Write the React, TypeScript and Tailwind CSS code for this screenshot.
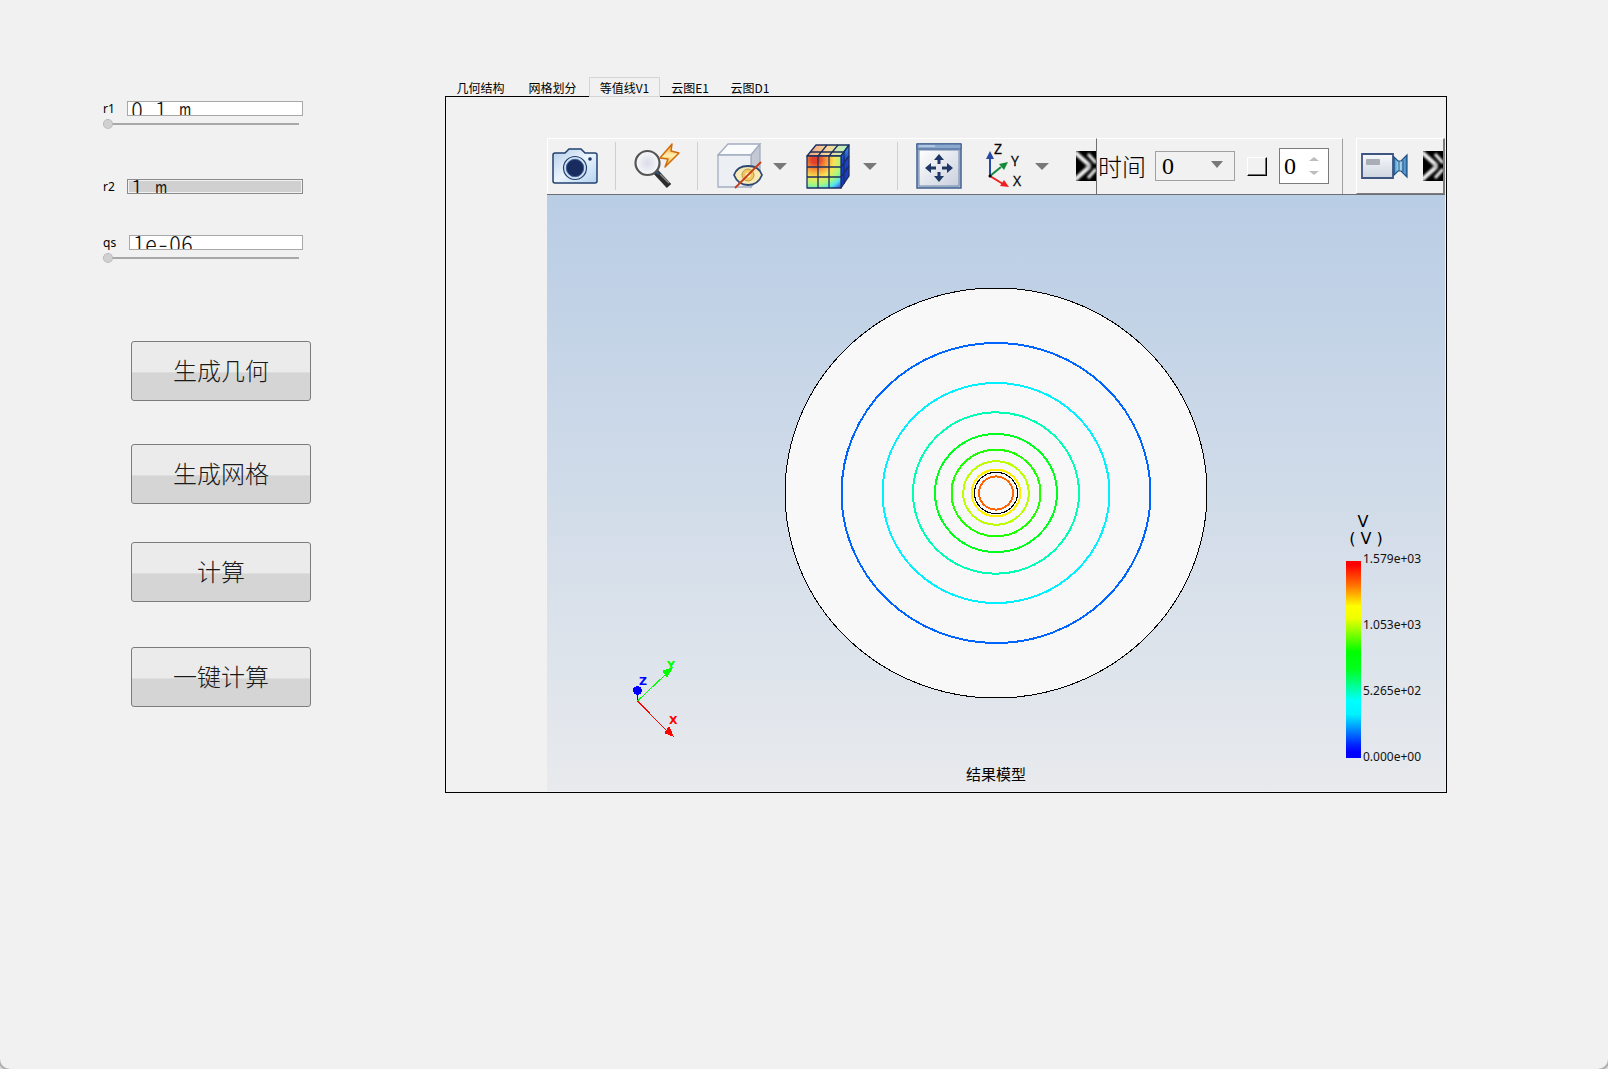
import { useState } from 'react';

const tabs = [
  { name: '几何结构', width: 'w-[71px]' },
  { name: '网格划分', width: 'w-[73px]' },
  { name: '等值线V1', width: 'w-[71px]' },
  { name: '云图E1', width: 'w-[60px]' },
  { name: '云图D1', width: 'w-[60px]' },
];

const contours = [
  { rx: 154.5, ry: 150, color: '#0064ff' },
  { rx: 113.5, ry: 110, color: '#00f0ff' },
  { rx: 83, ry: 80.7, color: '#00ffb4' },
  { rx: 61, ry: 59, color: '#00ff1e' },
  { rx: 44.5, ry: 43.3, color: '#1eff00' },
  { rx: 32.8, ry: 31.8, color: '#beff00' },
  { rx: 24.3, ry: 23.4, color: '#fff000' },
  { rx: 17, ry: 16.6, color: '#ff6400' },
];

const legend = [
  { value: '1.579e+03', y: 368 },
  { value: '1.053e+03', y: 434 },
  { value: '5.265e+02', y: 500 },
  { value: '0.000e+00', y: 566 },
];

export default function App() {
  const [active, setActive] = useState('等值线V1');

  return (
    <div className="min-h-screen bg-[#dedede] font-['Noto_Sans_CJK_SC',sans-serif] text-black">
      <div className="flex min-h-screen rounded-b-[10px] bg-[#f1f1f1] shadow-[0_0_0_2px_#b0b0b0]">
        <aside className="w-[445px] shrink-0 pt-[101px] pl-[103px]">
          <div className="w-[200px]">
            <Field id="r1" value="0.1 m" slider />
            <div className="h-[50px]" />
            <Field id="r2" value="1 m" readOnly />
            <div className="h-[41px]" />
            <Field id="qs" value="1e-06" slider />
          </div>
          <div className="mt-[78px] ml-7 flex w-[180px] flex-col">
            <ActionButton className="mb-[43px]">生成几何</ActionButton>
            <ActionButton className="mb-[38px]">生成网格</ActionButton>
            <ActionButton className="mb-[45px]">计算</ActionButton>
            <ActionButton>一键计算</ActionButton>
          </div>
        </aside>

        <main className="mr-[161px] min-w-0 flex-1 pt-[77px]">
          <div className="flex h-5" role="tablist">
            {tabs.map((tab) => (
              <button
                key={tab.name}
                role="tab"
                aria-selected={active === tab.name}
                onClick={() => setActive(tab.name)}
                className={`${tab.width} h-5 text-center text-xs whitespace-nowrap ${
                  active === tab.name ? 'border border-[#d4d4d4] bg-[#f1f1f1] leading-5' : 'border-b border-black leading-[22px]'
                }`}
              >
                {tab.name}
              </button>
            ))}
            <div className="flex-1 border-b border-black" />
          </div>
          <section className="border-x border-b border-black pt-[41px] pl-[101px] pr-px pb-px">
            <Toolbar />
            <Viewport />
          </section>
        </main>
      </div>
    </div>
  );
}

function Field({ id, value, slider, readOnly }: { id: string; value: string; slider?: boolean; readOnly?: boolean }) {
  return (
    <div>
      <div className="flex h-[15px] items-center">
        <label htmlFor={id} className={`${id === 'qs' ? 'w-[26px]' : 'w-6'} shrink-0 font-['Noto_Sans',sans-serif] text-xs leading-4`}>
          {id}
        </label>
        <input
          id={id}
          defaultValue={value}
          readOnly={readOnly}
          className={`h-[15px] min-w-0 flex-1 border p-px indent-[2px] text-2xl leading-6 font-light text-[#111] outline-none [font-feature-settings:'hwid'] ${
            readOnly ? 'border-[#8a8a8a] bg-[#d0d0d0] bg-clip-content' : 'border-[#a8a8a8] bg-white'
          }`}
        />
      </div>
      {slider && (
        <input
          type="range"
          aria-label={id}
          defaultValue={0}
          className="mt-[3px] block h-[10px] w-[196px] appearance-none bg-transparent [&::-webkit-slider-runnable-track]:h-[2px] [&::-webkit-slider-runnable-track]:bg-[#a8a8a8] [&::-webkit-slider-thumb]:-mt-1 [&::-webkit-slider-thumb]:size-[10px] [&::-webkit-slider-thumb]:appearance-none [&::-webkit-slider-thumb]:rounded-full [&::-webkit-slider-thumb]:border [&::-webkit-slider-thumb]:border-dotted [&::-webkit-slider-thumb]:border-[#a8a8a8] [&::-webkit-slider-thumb]:bg-[#d0d0d0]"
        />
      )}
    </div>
  );
}

function ActionButton({ children, className = '' }: { children: string; className?: string }) {
  return (
    <button
      className={`h-[60px] rounded-[3px] border border-[#7c7c7c] bg-linear-to-b from-[#ebebeb] from-52% to-[#d5d5d5] to-53% pb-[2px] text-2xl font-light text-[#1a1a1a] ${className}`}
    >
      {children}
    </button>
  );
}

function Toolbar() {
  return (
    <div className="flex h-[57px] border-b border-[#6e6e6e]">
      <div className="flex flex-1 items-center border-t border-l border-r border-white border-r-[#6e6e6e] pb-px pl-1">
        <button aria-label="截图"><CameraIcon /></button>
        <Separator className="ml-[17px]" />
        <button aria-label="快速缩放" className="ml-[18px]"><ZoomIcon /></button>
        <Separator className="ml-[16px]" />
        <button aria-label="隐藏" className="ml-[19px]"><HideCubeIcon /></button>
        <button aria-label="隐藏选项" className="ml-[10px]"><Caret /></button>
        <button aria-label="云图" className="ml-[19px]"><ColorCubeIcon /></button>
        <button aria-label="云图选项" className="ml-[13px]"><Caret /></button>
        <Separator className="ml-[20px]" />
        <button aria-label="适应窗口" className="ml-[18px]"><FitIcon /></button>
        <button aria-label="视图方向" className="ml-[23px]"><AxesIcon /></button>
        <button aria-label="视图选项" className="ml-[10px]"><Caret /></button>
        <button aria-label="更多" className="ml-auto"><MoreIcon /></button>
      </div>

      <div className="flex w-[246px] items-center border-t border-r border-t-white border-r-[#a0a0a0] pb-px pl-px">
        <label htmlFor="time" className="text-2xl font-light whitespace-nowrap">时间</label>
        <div className="relative ml-[9px]">
          <select
            id="time"
            className="block h-[30px] w-[80px] appearance-none border border-[#a0a0a0] bg-[#f1f1f1] pl-[6px] font-['Liberation_Serif',serif] text-2xl leading-7"
          >
            <option>0</option>
          </select>
          <span className="pointer-events-none absolute top-[10px] right-[12px]"><Caret small /></span>
        </div>
        <button aria-label="播放" className="ml-3 h-[19px] w-5 border-t border-l border-r border-b border-white border-r-black border-b-black shadow-[inset_-1px_-1px_0_#707070]" />
        <div className="relative ml-3">
          <input
            aria-label="帧"
            defaultValue="0"
            className="block h-9 w-[50px] border border-[#7c7c7c] bg-white pl-1 font-['Liberation_Serif',serif] text-2xl leading-8 outline-none"
          />
          <svg className="pointer-events-none absolute top-2 right-[10px]" width="10" height="19" viewBox="0 0 10 19">
            <path d="M5 1 10 5H0zM0 15h10l-5 4z" fill="#bdbdbd" />
          </svg>
        </div>
      </div>

      <div className="ml-[13px] flex w-[89px] items-center border-t border-r-2 border-b border-l border-white border-r-[#7c7c7c] border-b-[#7c7c7c] pl-1">
        <button aria-label="录像"><VideoIcon /></button>
        <button aria-label="更多" className="ml-auto"><MoreIcon /></button>
      </div>
    </div>
  );
}

function Separator({ className }: { className: string }) {
  return <div className={`h-12 w-px shrink-0 bg-[#cfcfcf] ${className}`} />;
}

function Caret({ small }: { small?: boolean }) {
  return (
    <svg width={small ? 12 : 14} height="7" viewBox="0 0 14 7" preserveAspectRatio="none" className="block">
      <path d="M0 0h14L7 7z" fill="#787878" />
    </svg>
  );
}

function Viewport() {
  return (
    <svg viewBox="0 0 898 596" className="block w-full">
      <defs>
        <linearGradient id="sky" x1="0" y1="0" x2="0" y2="1">
          <stop offset="0" stopColor="#b9cde5" />
          <stop offset="1" stopColor="#e8eaed" />
        </linearGradient>
        <linearGradient id="scale" x1="0" y1="0" x2="0" y2="1">
          <stop offset="0.02" stopColor="#ff0000" />
          <stop offset="0.12" stopColor="#ff6e00" />
          <stop offset="0.23" stopColor="#ffff00" />
          <stop offset="0.29" stopColor="#f0ff00" />
          <stop offset="0.46" stopColor="#00ff00" />
          <stop offset="0.55" stopColor="#00ff1e" />
          <stop offset="0.71" stopColor="#00ffff" />
          <stop offset="0.78" stopColor="#00f0ff" />
          <stop offset="0.93" stopColor="#0028ff" />
          <stop offset="0.97" stopColor="#0000ff" />
        </linearGradient>
      </defs>
      <rect width="898" height="596" fill="url(#sky)" />
      <g fill="none" shapeRendering="crispEdges">
        <ellipse cx="449" cy="298" rx="211" ry="205" fill="#f8f8f8" stroke="#000" />
        {contours.map((c) => (
          <ellipse key={c.color} cx="449" cy="298" rx={c.rx} ry={c.ry} stroke={c.color} strokeWidth="2" />
        ))}
        <ellipse cx="449" cy="298" rx="21.5" ry="20.7" stroke="#000" />
      </g>

      {/* orientation triad */}
      <g shapeRendering="crispEdges" strokeWidth="1">
        <path d="M90.500 506v-12" stroke="#0000ff" />
        <path d="M90.500 506 118 480" stroke="#00ff00" />
        <path d="M90.500 506 120 536" stroke="#ff0000" />
        <circle cx="90.500" cy="495.500" r="4.500" fill="#0000ff" />
        <path d="M125 473l-9 3 4 6z" fill="#00ff00" stroke="#00ff00" />
        <path d="M126 541l-8-3 4-6z" fill="#ff0000" stroke="#ff0000" />
      </g>
      <g fontFamily="DejaVu Sans, sans-serif" fontSize="11" fontWeight="bold">
        <text x="92" y="490" fill="#0000ff">Z</text>
        <text x="120" y="474" fill="#00ff00">Y</text>
        <text x="122" y="529" fill="#ff0000">X</text>
      </g>

      {/* colour scale */}
      <g fontFamily="DejaVu Sans, sans-serif" fontSize="16" textAnchor="middle">
        <text x="816" y="332">V</text>
        <text x="819" y="349">( V )</text>
      </g>
      <rect x="799" y="366" width="15" height="197" fill="url(#scale)" />
      <g fontFamily="Noto Sans, sans-serif" fontSize="12" fill="#111">
        {legend.map((l) => (
          <text key={l.value} x="816" y={l.y}>{l.value}</text>
        ))}
      </g>

      <text x="449" y="585" fontSize="15" textAnchor="middle">结果模型</text>
    </svg>
  );
}

function CameraIcon() {
  return (
    <svg width="46" height="38" viewBox="0 0 46 38" className="block">
      <defs>
        <linearGradient id="cam" x1="0" y1="0" x2="1" y2="1">
          <stop offset="0" stopColor="#b4cdea" />
          <stop offset="0.5" stopColor="#eaf4fd" />
          <stop offset="1" stopColor="#b4d2f0" />
        </linearGradient>
      </defs>
      <path d="M3 6h10l4-4h12l4 4h10q2 0 2 2v26q0 2-2 2H3q-2 0-2-2V8q0-2 2-2z" fill="url(#cam)" stroke="#23406f" strokeWidth="1.500" />
      <circle cx="23" cy="21" r="11.500" fill="#cfe0f2" stroke="#23406f" strokeWidth="1.200" />
      <circle cx="23" cy="21" r="8.700" fill="#182c60" stroke="#3d5f95" />
      <circle cx="38" cy="12" r="1.800" fill="#1d3564" />
    </svg>
  );
}

function ZoomIcon() {
  return (
    <svg width="47" height="46" viewBox="0 0 47 46" className="block">
      <defs>
        <radialGradient id="lens">
          <stop offset="0" stopColor="#d9dce8" />
          <stop offset="1" stopColor="#f8f9fb" />
        </radialGradient>
        <linearGradient id="bolt" x1="0" y1="0" x2="0" y2="1">
          <stop offset="0" stopColor="#ff9d1e" />
          <stop offset="0.5" stopColor="#fff0b0" />
          <stop offset="1" stopColor="#ffa21c" />
        </linearGradient>
      </defs>
      <path d="M22 29l13 14" stroke="#2c2c2c" strokeWidth="6" />
      <path d="M26 31l9 9" stroke="#8a8a8a" strokeWidth="1.500" />
      <path d="M21 27l4 4" stroke="#2c5378" strokeWidth="3" />
      <circle cx="13.500" cy="20" r="12" fill="url(#lens)" stroke="#555" strokeWidth="2.200" />
      <path d="M38 1 26 15l8 1-3 8 14-14-8-2z" fill="url(#bolt)" stroke="#d06c0c" strokeWidth="1.500" strokeLinejoin="round" />
    </svg>
  );
}

function HideCubeIcon() {
  return (
    <svg width="46" height="46" viewBox="0 0 46 46" className="block">
      <path d="M1 12 11 1h32L34 12z" fill="#fafbfc" stroke="#a4aec2" strokeWidth="1.300" />
      <path d="M34 12 43 1v31l-9 12z" fill="#c3c8d2" stroke="#a4aec2" strokeWidth="1.300" />
      <path d="M1 12h33v32H1z" fill="#eceff3" stroke="#a4aec2" strokeWidth="1.300" />
      <path d="M17 32q3-9 14-9t14 9q-4 10-14 10t-14-10z" fill="#f8eab4" stroke="#2d4874" strokeWidth="1.800" />
      <circle cx="31" cy="32" r="6" fill="#f3c95f" stroke="#b9984e" />
      <circle cx="31" cy="32" r="2.500" fill="#fff3c7" />
      <path d="M44 19 18 45" stroke="#c43d1e" strokeWidth="1.800" />
    </svg>
  );
}

function ColorCubeIcon() {
  return (
    <svg width="44" height="45" viewBox="0 0 44 45" className="block">
      <defs>
        <radialGradient id="cubeFront" cx="0.25" cy="0.12" r="1.1">
          <stop offset="0.1" stopColor="#e0402c" />
          <stop offset="0.3" stopColor="#f79a3a" />
          <stop offset="0.5" stopColor="#f7e557" />
          <stop offset="0.7" stopColor="#a8f77c" />
          <stop offset="0.86" stopColor="#52e4f0" />
          <stop offset="1" stopColor="#3b63ef" />
        </radialGradient>
        <linearGradient id="cubeTop">
          <stop offset="0" stopColor="#f0a080" />
          <stop offset="0.5" stopColor="#fbd79a" />
          <stop offset="1" stopColor="#a2f7c8" />
        </linearGradient>
        <linearGradient id="cubeSide" x1="0" y1="0" x2="0" y2="1">
          <stop offset="0" stopColor="#3f9ce8" />
          <stop offset="0.35" stopColor="#1b45d0" />
          <stop offset="1" stopColor="#1a34c0" />
        </linearGradient>
      </defs>
      <g stroke="#1c2f5e" strokeWidth="1.300" strokeLinejoin="round">
        <path d="M1 12 10 1h33l-8 11z" fill="url(#cubeTop)" />
        <path d="M35 12 43 1v31l-8 12z" fill="url(#cubeSide)" />
        <path d="M1 12h34v32H1z" fill="url(#cubeFront)" />
        <path d="M12 12v32M23 12v32M1 23h34M1 33h34M12 12l9-11M23 12 32 1M4 8h34M38 8v32M35 23l8-11M35 33l8-11" fill="none" />
      </g>
    </svg>
  );
}

function FitIcon() {
  return (
    <svg width="46" height="46" viewBox="0 0 46 46" className="block">
      <defs>
        <linearGradient id="fit" x1="0" y1="0" x2="1" y2="1">
          <stop offset="0" stopColor="#fff" />
          <stop offset="1" stopColor="#c9cfdc" />
        </linearGradient>
      </defs>
      <path d="M1 1h44v44H1z" fill="#b9c6d9" stroke="#40608f" strokeWidth="1.500" />
      <path d="M3 7h40v36H3z" fill="url(#fit)" stroke="#7089ae" />
      <path d="M1 1h44v5H1z" fill="#8ba9cf" stroke="#40608f" />
      <path d="M3 3h16" stroke="#d6e5f5" />
      <g fill="#1e3765">
        <path d="M23 11l-5 6h3.500v4h3V17H28zM23 39l-5-6h3.500v-4h3v4H28zM9 25l6-5v3.500h5v3h-5V30zM37 25l-6-5v3.500h-5v3h5V30z" />
      </g>
    </svg>
  );
}

function AxesIcon() {
  return (
    <svg width="40" height="48" viewBox="0 0 40 48" className="block overflow-visible">
      <path d="M5 34V15" stroke="#2549a5" strokeWidth="2" />
      <path d="M5 9 1 17h8z" fill="#2549a5" />
      <path d="M5 34 16 25" stroke="#128a3c" strokeWidth="2" />
      <path d="M23 20l-9 2 5 6z" fill="#128a3c" />
      <path d="M5 34l13 8" stroke="#f01e1e" strokeWidth="2" />
      <path d="M24 45l-9-1 4-6z" fill="#f01e1e" />
      <circle cx="5" cy="34" r="1.500" />
      <g fontFamily="Open Sans, sans-serif" fontSize="14" stroke="#111" strokeWidth="0.300">
        <text x="9" y="12">Z</text>
        <text x="26" y="24">Y</text>
        <text x="28" y="44">X</text>
      </g>
    </svg>
  );
}

function MoreIcon() {
  return (
    <svg width="20" height="30" viewBox="0 0 20 30" className="block">
      <defs>
        <filter id="soft" x="-0.2" y="-0.2" width="1.4" height="1.4">
          <feGaussianBlur stdDeviation="0.900" />
        </filter>
      </defs>
      <path d="M0 0h20v30H0z" />
      <g fill="none" stroke="#f4f4f4" filter="url(#soft)">
        <path d="M-1 1l3 3 10 9v4L2 26l-3 3" strokeWidth="4" />
        <path d="M12 3l8 9M20 18l-8 9" strokeWidth="3" />
        <path d="M10 15h5" stroke="#bdbdbd" strokeWidth="5" />
      </g>
      <path d="M0 7l7 8-7 8z" />
    </svg>
  );
}

function VideoIcon() {
  return (
    <svg width="48" height="28" viewBox="0 0 48 28" className="block">
      <defs>
        <linearGradient id="vid" x1="0" y1="0" x2="0" y2="1">
          <stop offset="0" stopColor="#f7f8fa" />
          <stop offset="1" stopColor="#cfd5e0" />
        </linearGradient>
        <linearGradient id="horn">
          <stop offset="0" stopColor="#2d8fd0" />
          <stop offset="0.4" stopColor="#bde6fa" />
          <stop offset="1" stopColor="#2d7cc0" />
        </linearGradient>
      </defs>
      <path d="M1 2h31v24H1z" fill="url(#vid)" stroke="#3d5580" strokeWidth="1.800" />
      <rect x="5" y="7" width="14" height="6" rx="1" fill="#a8adb6" />
      <path d="M33 5l4 4h3l6-6v22l-6-6h-3l-4 4z" fill="url(#horn)" stroke="#23507f" strokeWidth="1.200" />
      <path d="M38 9v10M42 8v12" stroke="#20486f" />
    </svg>
  );
}
